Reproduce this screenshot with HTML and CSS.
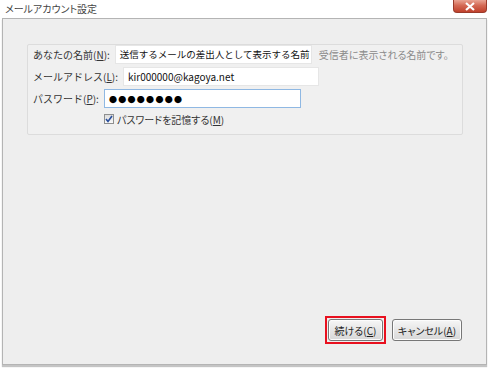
FILE: index.html
```html
<!DOCTYPE html>
<html lang="ja">
<head>
  <meta charset="UTF-8"/>
  <title>メールアカウント設定</title>
  <link rel="stylesheet" href="styles.css">
</head>
<body>

<div class="titlebar">
  <div class="title">メールアカウント設定</div>
  <div class="close">
    <svg width="12" height="9" viewBox="0 0 12 9">
      <path d="M2 1 L10 8 M10 1 L2 8" stroke="#fff" stroke-width="2.2" fill="none"/>
    </svg>
  </div>
</div>

<div class="window">

  <div class="group">
    <div class="row">
      <span class="label">あなたの名前(<u>N</u>):</span>
      <div class="field w1">送信するメールの差出人として表示する名前</div>
      <span class="hint">受信者に表示される名前です。</span>
    </div>
    <div class="row">
      <span class="label">メールアドレス(<u>L</u>):</span>
      <div class="field w2">kir000000@kagoya.net</div>
    </div>
    <div class="row">
      <span class="label">パスワード(<u>P</u>):</span>
      <div class="field w3 focus">
        <span class="dots">●●●●●●●●</span>
      </div>
    </div>
    <div class="check-row">
      <span class="checkbox">
        <svg width="8" height="8" viewBox="0 0 8 8">
          <path d="M1 4 L3 6.5 L7 1" stroke="#2a4f9c" stroke-width="1.6" fill="none"/>
        </svg>
      </span>
      <span class="check-label">パスワードを記憶する(<u>M</u>)</span>
    </div>
  </div>

  <div class="buttons">
    <span class="highlight">
      <button class="btn btn-next">続ける(<u>C</u>)</button>
    </span>
    <button class="btn btn-cancel">キャンセル(<u>A</u>)</button>
  </div>

</div>

</body>
</html>
```

FILE: styles.css
```css
* {
  box-sizing: border-box;
}

body {
  margin: 0;
  width: 490px;
  height: 368px;
  background: #fff;
  font-family: "Noto Sans CJK JP", "Noto Sans", sans-serif;
  font-size: 10px;
  color: #333;
  overflow: hidden;
}

u {
  text-decoration: underline;
  text-underline-offset: 1px;
}

.titlebar {
  display: flex;
  align-items: flex-start;
  height: 18px;
  padding-left: 5px;
}

.title {
  line-height: 18px;
  color: #444;
  font-feature-settings: "palt";
}

.close {
  margin-left: auto;
  margin-right: 3px;
  width: 34px;
  height: 13px;
  border: 1px solid #9a3a2a;
  border-top: none;
  border-radius: 0 0 4px 4px;
  background: linear-gradient(#e9a493, #d46a55 45%, #c0412c);
  display: flex;
  align-items: center;
  justify-content: center;
}

.window {
  display: flex;
  flex-direction: column;
  height: 347px;
  margin: 0 3px 0 2px;
  padding: 25px 24px 20px 24px;
  background: #eeeeee;
  border: 1px solid #b4b4b4;
  box-shadow: 0 2px 1px #c4c4c4;
}

.group {
  width: 436px;
  height: 91px;
  padding: 0 5px;
  background: #f0f0f0;
  border: 1px solid #dcdcdc;
  border-radius: 2px;
}

.row {
  display: flex;
  align-items: center;
  height: 19px;
  margin-bottom: 3px;
}

.label {
  flex: none;
  color: #333;
  white-space: nowrap;
  margin-right: 5px;
}

.field {
  flex: none;
  height: 19px;
  line-height: 17px;
  padding: 0 4px;
  background: #fff;
  border: 1px solid #e6e6e6;
  color: #111;
  white-space: nowrap;
  overflow: hidden;
}

.w1 {
  width: 197px;
  font-size: 9.5px;
}

.w2 {
  width: 196px;
}

.w3 {
  width: 197px;
}

.focus {
  border-color: #8fb8e3;
}

.dots {
  font-size: 8px;
  letter-spacing: 1.3px;
  color: #000;
}

.hint {
  margin-left: 7px;
  color: #8a8a8a;
  white-space: nowrap;
  font-feature-settings: "palt";
}

.check-row {
  display: flex;
  align-items: center;
  height: 16px;
  margin-top: 1px;
  padding-left: 71px;
}

.checkbox {
  display: flex;
  align-items: center;
  justify-content: center;
  width: 10px;
  height: 10px;
  margin-right: 3px;
  border: 1px solid #8e8f8f;
  background: linear-gradient(#dcdcdc, #fafafa);
}

.check-label {
  white-space: nowrap;
  font-feature-settings: "palt";
}

.buttons {
  margin-top: auto;
  display: flex;
  justify-content: flex-end;
  align-items: center;
  gap: 6px;
}

.highlight {
  display: flex;
  padding: 1px;
  border: 2px solid #e8101e;
}

.btn {
  height: 22px;
  padding: 0;
  font-family: inherit;
  font-size: 10px;
  color: #222;
  white-space: nowrap;
  font-feature-settings: "palt";
  background: linear-gradient(#f6f6f6, #e6e6e6 50%, #d8d8d8);
  border: 1px solid #777;
  border-radius: 3px;
  box-shadow: inset 0 0 0 1px #fcfcfc;
}

.btn-next {
  width: 55px;
}

.btn-cancel {
  width: 70px;
}
```
